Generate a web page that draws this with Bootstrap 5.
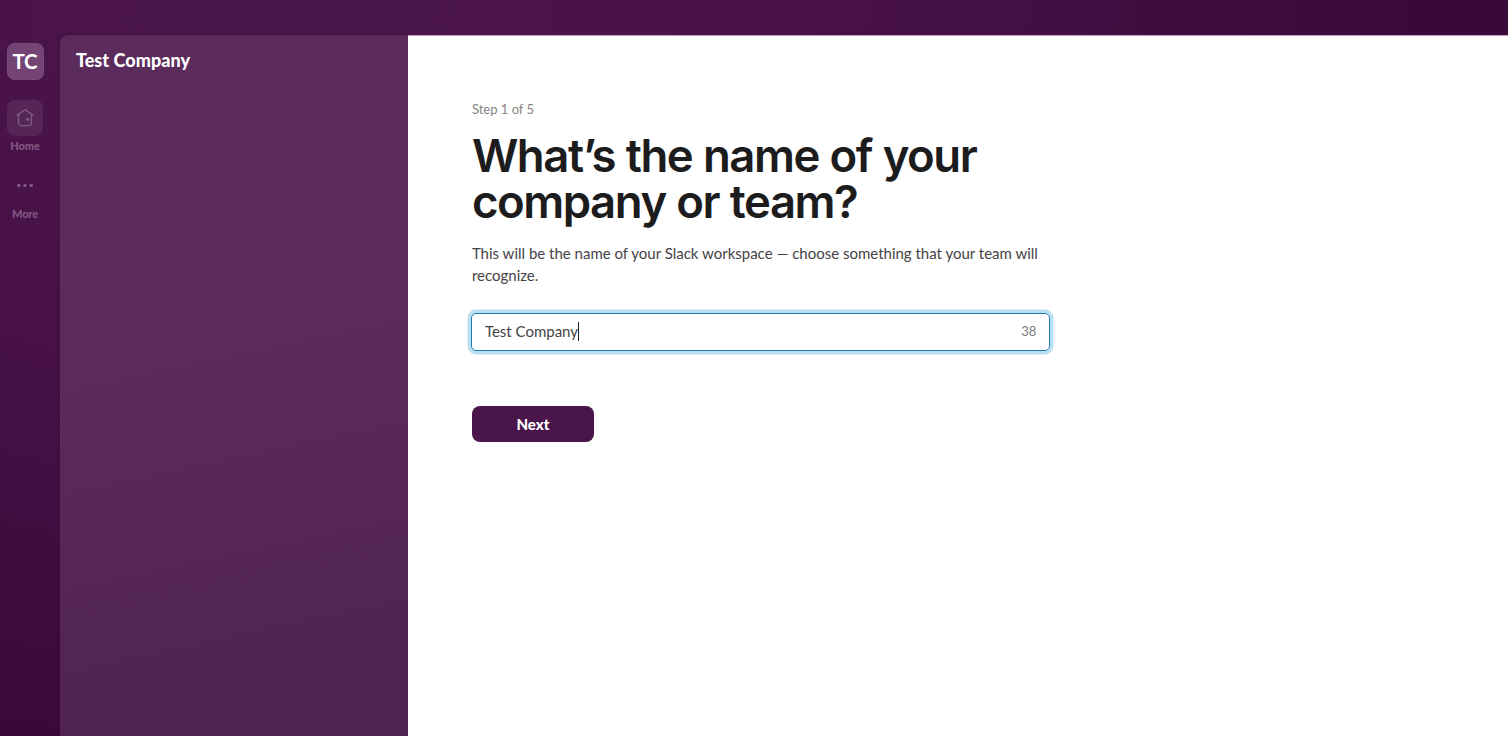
<!DOCTYPE html>
<html lang="en">
<head>
<meta charset="utf-8">
<meta name="viewport" content="width=device-width, initial-scale=1">
<title>Create a workspace</title>
<link href="https://cdn.jsdelivr.net/npm/bootstrap@5.3.0/dist/css/bootstrap.min.css" rel="stylesheet">
<style>
  body {
    font-family: Lato, sans-serif;
    color: #1d1c1d;
    background:
      radial-gradient(ellipse 1150px 760px at 290px 0, #4a154b 0%, #481249 45%, #3a093a 100%);
  }
  .top-bar { height: 35px; }
  .rail { width: 60.4px; padding: 8px 10.4px 0 0; }
  .team-tile {
    width: 37px; height: 37px; border-radius: 8px;
    background: #734474; border: 1px solid #83588a55; color: #fff;
    font-size: 20.5px; font-weight: 700; line-height: 35px; letter-spacing: -.1px;
  }
  .home-tile { width: 36px; height: 36px; border-radius: 8px; background: #572658; margin-top: 19.5px; }
  .rail-text { font-size: 11px; font-weight: 900; line-height: 14px; color: #80577f; letter-spacing: -.12px; }
  .home-text { margin-top: 3px; }
  .rail svg { color: #83598a; }
  .side {
    width: 348px; border-top-left-radius: 8px; padding: 10px 15.5px;
    background: linear-gradient(168deg, #5b2b5c 0%, #5b2b5c 45%, #512352 90%);
    box-shadow: 0 0 3px #30063060; border-top: 1px solid #542456;
  }
  .side-title { font-size: 18px; font-weight: 900; line-height: 28px; letter-spacing: .05px; color: #fff; }
  .pane { padding: 63px 0 0 63px; border-top: 1px solid #c3a3c4; }
  .form-col { width: 579px; }
  .step { font-size: 13px; line-height: 18px; color: #868686; padding: .5px 0 0 .5px; }
  .headline { font-family: Inter, sans-serif; font-size: 45.5px; line-height: 46px; font-weight: 600; letter-spacing: -1.45px; word-spacing: .6px; margin: 15px 0 0 .5px; white-space: nowrap; }
  .intro { font-size: 15px; line-height: 22px; color: #454245; margin: 17.5px 0 0; padding-left: .5px; }
  .name-box {
    height: 38px; margin-top: 27px; padding: 0 13px 0 12.5px; border: 1px solid #2278b5;
    border-radius: 5px; box-shadow: 0 0 0 3.5px #b9e0f0; color: #454245; font-size: 15px;
  }
  .name-text { margin-top: -1px; }
  .caret { width: 1px; height: 19px; margin-top: -1px; background: #222; }
  .count { font-size: 13px; color: #7a7a7a; }
  .btn-next {
    --bs-btn-bg: #4a154b; --bs-btn-color: #fff; --bs-btn-hover-bg: #5a1d5b; --bs-btn-hover-color: #fff;
    width: 122px; height: 36px; margin: 55px 0 0 .5px; padding: 0; border: 0; border-radius: 8px;
    font-size: 15px; font-weight: 900; line-height: 36px;
  }
</style>
</head>
<body class="vh-100 overflow-hidden d-flex flex-column">
  <header class="top-bar flex-shrink-0"></header>
  <div class="d-flex flex-grow-1">
    <nav class="rail d-flex flex-column align-items-center flex-shrink-0">
      <div class="team-tile d-flex align-items-center justify-content-center">TC</div>
      <div class="home-tile d-flex align-items-center justify-content-center">
        <svg width="18" height="18" viewBox="0 0 18 18" fill="none" stroke="currentColor" stroke-width="1.3" stroke-linecap="round" stroke-linejoin="round"><path d="M1 6.4 8.3 1.1a1.2 1.2 0 0 1 1.4 0L17 6.4M2.6 5.4v8.8a2.4 2.4 0 0 0 2.4 2.4h8a2.4 2.4 0 0 0 2.4-2.4V5.4"/><circle cx="11.6" cy="10.2" r="1.5" fill="currentColor" stroke="none"/></svg>
      </div>
      <div class="rail-text home-text">Home</div>
      <svg class="mt-4" width="18" height="18" viewBox="0 0 18 18" fill="currentColor"><circle cx="2.8" cy="8.5" r="1.7"/><circle cx="9" cy="8.5" r="1.7"/><circle cx="15.2" cy="8.5" r="1.7"/></svg>
      <div class="rail-text mt-2 pt-1">More</div>
    </nav>
    <aside class="side flex-shrink-0"><div class="side-title">Test Company</div></aside>
    <main class="pane flex-grow-1 bg-white">
      <div class="form-col">
        <div class="step">Step 1 of 5</div>
        <h1 class="headline">What’s the name of your<br>company or team?</h1>
        <p class="intro">This will be the name of your Slack workspace — choose something that your team will recognize.</p>
        <div class="name-box d-flex align-items-center">
          <span class="name-text">Test Company</span><span class="caret"></span>
          <span class="count ms-auto">38</span>
        </div>
        <button type="button" class="btn btn-next">Next</button>
      </div>
    </main>
  </div>
<script src="https://cdn.jsdelivr.net/npm/bootstrap@5.3.0/dist/js/bootstrap.bundle.min.js"></script>
</body>
</html>
